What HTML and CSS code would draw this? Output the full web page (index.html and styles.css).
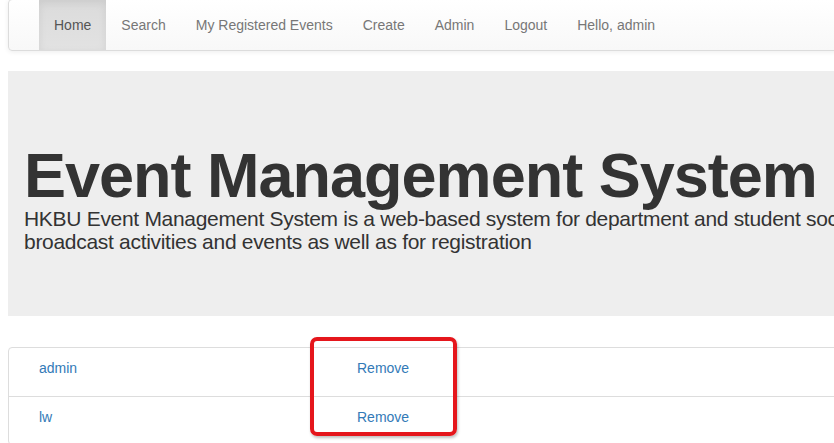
FILE: index.html
```html
<!DOCTYPE html>
<html>
<head>
<meta charset="utf-8">
<link rel="stylesheet" href="styles.css">
</head>
<body>
<div class="page">
  <nav class="navbar">
    <ul class="nav">
      <li class="active"><a href="#">Home</a></li>
      <li><a href="#">Search</a></li>
      <li><a href="#">My Registered Events</a></li>
      <li><a href="#">Create</a></li>
      <li><a href="#">Admin</a></li>
      <li><a href="#">Logout</a></li>
      <li><a href="#">Hello, admin</a></li>
    </ul>
  </nav>
  <div class="jumbotron">
    <h1>Event Management System</h1>
    <p>HKBU Event Management System is a web-based system for department and student societies to broadcast activities and events as well as for registration</p>
  </div>
  <div class="users">
    <div class="row"><a class="name" href="#">admin</a><a class="action" href="#">Remove</a></div>
    <div class="row"><a class="name" href="#">lw</a><a class="action" href="#">Remove</a></div>
    <div class="highlight"></div>
  </div>
</div>
</body>
</html>
```
FILE: styles.css
```css
html, body {
  margin: 0;
  padding: 0;
  overflow: hidden;
  background: #fff;
}
body {
  font-family: "Liberation Sans", Arial, sans-serif;
  font-size: 14px;
  line-height: 20px;
  color: #333;
}
.page {
  width: 1140px;
  padding-left: 8px;
  position: relative;
}
.navbar {
  margin-top: -1px;
  height: 50px;
  border: 1px solid #dcdcdc;
  border-radius: 4px;
  background: linear-gradient(to bottom, #ffffff 0%, #f8f8f8 100%);
  box-shadow: inset 0 1px 0 rgba(255,255,255,.15), 0 1px 5px rgba(0,0,0,.075);
  padding-left: 30px;
}
.nav {
  list-style: none;
  margin: 0;
  padding: 0;
  display: flex;
  height: 50px;
}
.nav li a {
  display: block;
  padding: 15px 15px;
  line-height: 20px;
  color: #777;
  text-decoration: none;
}
.nav li.active a {
  color: #555;
  background: linear-gradient(to bottom, #dbdbdb 0%, #e2e2e2 100%);
  box-shadow: inset 0 3px 9px rgba(0,0,0,.075);
}
.jumbotron {
  margin-top: 20px;
  background: #eeeeee;
  height: 245px;
  box-sizing: border-box;
  padding: 73px 16px 0 16px;
}
.jumbotron h1 {
  margin: 0;
  font-size: 63px;
  line-height: 63px;
  font-weight: bold;
  color: #333;
  letter-spacing: -1px;
  white-space: nowrap;
}
.jumbotron p {
  margin: 0;
  width: 930px;
  font-size: 21px;
  line-height: 23px;
  letter-spacing: -0.3px;
  color: #333;
}
.users {
  margin-top: 31px;
  border: 1px solid #ddd;
  border-radius: 4px;
  position: relative;
}
.row {
  display: flex;
  height: 48px;
  box-sizing: border-box;
  padding: 10px 0 0 30px;
}
.row + .row {
  border-top: 1px solid #ddd;
}
.row a {
  color: #337ab7;
  text-decoration: none;
}
.row .name {
  width: 318px;
}
.highlight {
  position: absolute;
  left: 301px;
  top: -11px;
  width: 139px;
  height: 91px;
  border: 4px solid #e5161c;
  border-radius: 7px;
  box-shadow: 1px 2px 3px rgba(0,0,0,.25);
}
```
